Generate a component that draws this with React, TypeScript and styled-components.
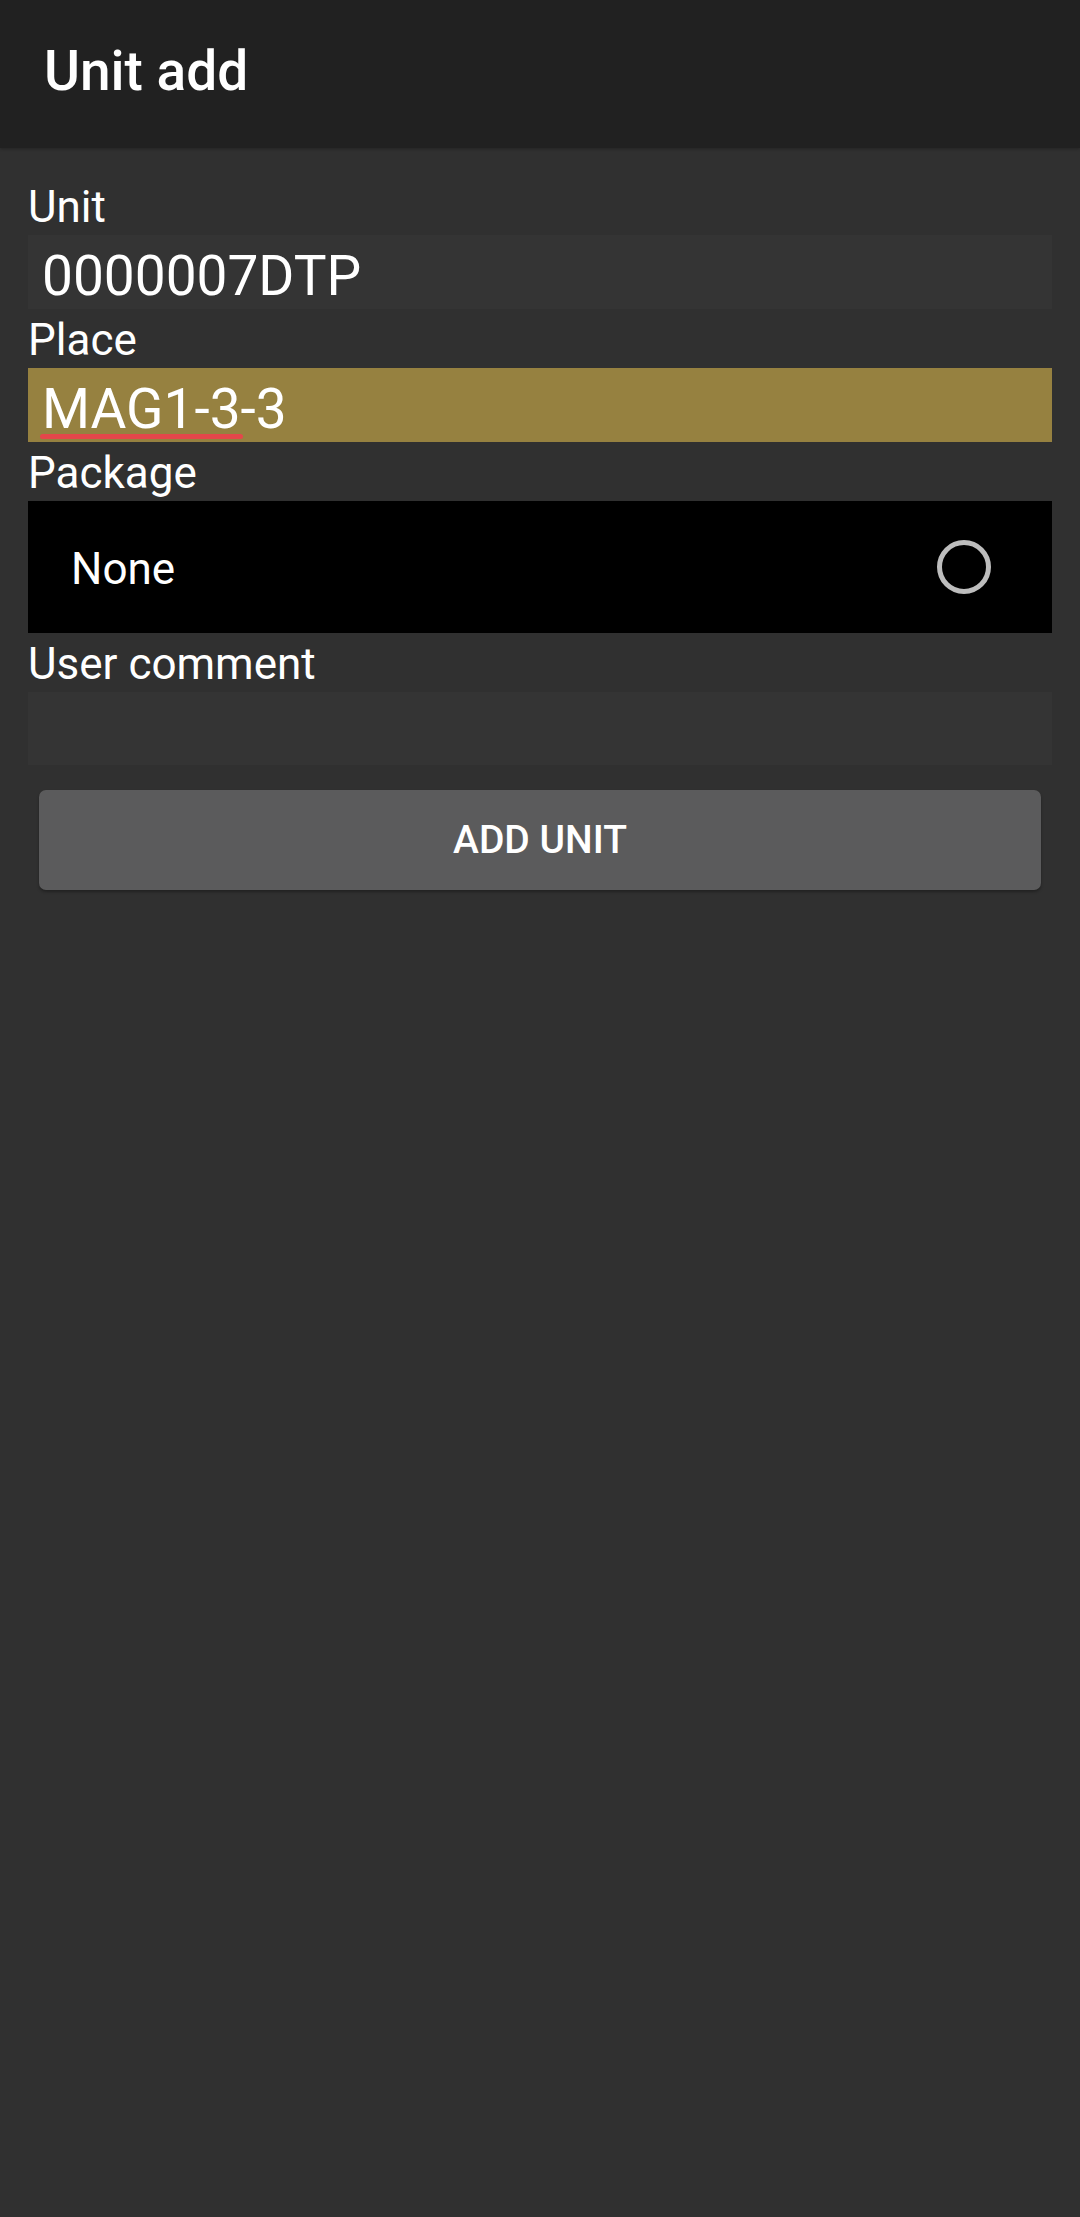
import React from "react";
import styled, { createGlobalStyle } from "styled-components";

const Global = createGlobalStyle`
  html, body {
    margin: 0;
    padding: 0;
    background: #303030;
  }
  body {
    font-family: Roboto, "Noto Sans", "Liberation Sans", sans-serif;
    color: #ffffff;
    -webkit-font-smoothing: antialiased;
  }
  * { box-sizing: border-box; }
`;

const Screen = styled.div`
  min-height: 2217px;
  background: #303030;
  display: flex;
  flex-direction: column;
`;

const Toolbar = styled.header`
  height: 148px;
  background: #212121;
  display: flex;
  align-items: center;
  padding: 0 0 0 44px;
  box-shadow: 0 1px 3px rgba(0, 0, 0, 0.25);
`;

const Title = styled.h1`
  margin: 0;
  font-size: 55px;
  font-weight: 500;
  line-height: 66px;
  padding-bottom: 6px;
  color: #ffffff;
`;

const Form = styled.main`
  display: flex;
  flex-direction: column;
  padding: 28px 28px 0;
`;

const Label = styled.div`
  font-size: 44px;
  line-height: 49px;
  height: 59px;
  padding-top: 7px;
  color: #ffffff;
`;

const Field = styled.div<{ $highlight?: boolean; $tall?: number }>`
  height: ${(p) => p.$tall ?? 74}px;
  background: ${(p) => (p.$highlight ? "#968140" : "#343434")};
  padding: 9px 14px 0;
  font-size: 55px;
  line-height: 64px;
  color: #ffffff;
  white-space: nowrap;
`;

const Misspelled = styled.span`
  position: relative;
  &::after {
    content: "";
    position: absolute;
    left: -2px;
    right: -2px;
    bottom: 2px;
    height: 5px;
    border-radius: 3px;
    background: #e4474a;
  }
`;

const Spinner = styled.div`
  height: 132px;
  background: #000000;
  display: flex;
  align-items: center;
  justify-content: space-between;
  padding: 0 61px 0 43px;
`;

const SpinnerText = styled.span`
  font-size: 44px;
  line-height: 49px;
  padding-top: 4px;
  color: #ffffff;
`;

const Radio = styled.span`
  width: 54px;
  height: 54px;
  border-radius: 50%;
  border: 5px solid #bdbdbd;
  display: block;
`;

const Button = styled.button`
  margin: 25px 11px 0;
  height: 100px;
  border: none;
  border-radius: 7px;
  background: #5b5b5c;
  color: #ffffff;
  font-family: Roboto, "Noto Sans", "Liberation Sans", sans-serif;
  font-size: 39px;
  font-weight: 500;
  text-transform: uppercase;
  padding: 0;
  box-shadow: 0 2px 3px rgba(0, 0, 0, 0.3);
`;

export default function App() {
  return (
    <>
      <Global />
      <Screen>
        <Toolbar>
          <Title>Unit add</Title>
        </Toolbar>
        <Form>
          <Label>Unit</Label>
          <Field>0000007DTP</Field>
          <Label>Place</Label>
          <Field $highlight>
            <Misspelled>MAG1-3</Misspelled>-3
          </Field>
          <Label>Package</Label>
          <Spinner>
            <SpinnerText>None</SpinnerText>
            <Radio />
          </Spinner>
          <Label>User comment</Label>
          <Field $tall={73} />
          <Button>Add unit</Button>
        </Form>
      </Screen>
    </>
  );
}
